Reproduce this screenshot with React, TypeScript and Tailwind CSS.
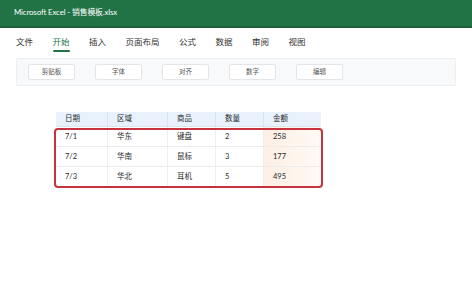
const tabs = ['文件', '开始', '插入', '页面布局', '公式', '数据', '审阅', '视图'];
const groups = ['剪贴板', '字体', '对齐', '数字', '编辑'];

const rows = [
    { date: '7/1', region: '华东', product: '键盘', qty: '2', amount: '258' },
    { date: '7/2', region: '华南', product: '鼠标', qty: '3', amount: '177' },
    { date: '7/3', region: '华北', product: '耳机', qty: '5', amount: '495' },
];

const font = { fontFamily: 'Lato, "Noto Sans CJK SC", sans-serif' };

const App = () => {
    return (
        <div className="w-[472px] h-[288px] bg-white overflow-hidden" style={font}>
            {/* title bar */}
            <div className="h-[28px] bg-[#217346] border-b-[2px] border-[#1c5f3a] flex items-center px-[14px]">
                <span className="text-[7.8px] text-white tracking-[-0.1px]">
                    Microsoft Excel - 销售模板.xlsx
                </span>
            </div>

            {/* ribbon tabs */}
            <div className="flex gap-[19.5px] px-[16px] pt-[9px] h-[30px]">
                {tabs.map((t) => (
                    <div key={t} className="flex flex-col items-center">
                        <span
                            className={
                                t === '开始'
                                    ? 'text-[8.5px] leading-[10px] text-[#217346]'
                                    : 'text-[8.5px] leading-[10px] text-[#333333]'
                            }
                        >
                            {t}
                        </span>
                        {t === '开始' && (
                            <div className="mt-[3px] h-[2px] w-full rounded-full bg-[#217346]" />
                        )}
                    </div>
                ))}
            </div>

            {/* ribbon groups */}
            <div className="mx-[16px] h-[28px] bg-[#f8f9fa] border border-[#eceeef] rounded-[2px] flex items-center gap-[20px] px-[11px]">
                {groups.map((g) => (
                    <div
                        key={g}
                        className="w-[47px] h-[16px] bg-white border border-[#e3e5e8] rounded-[2px] flex items-center justify-center text-[6.5px] text-[#555555]"
                    >
                        {g}
                    </div>
                ))}
            </div>

            {/* sheet */}
            <div className="pl-[56px] pt-[26px]">
                <div className="w-[265px] text-[7.5px] text-[#2b2b2b]">
                    <div className="grid grid-cols-[52px_60px_48px_48px_57px] h-[15px] bg-[#e8f1fc] border-b border-[#dbe6f3]">
                        {['日期', '区域', '商品', '数量', '金额'].map((h, i) => (
                            <div
                                key={h}
                                className={
                                    i < 4
                                        ? 'flex items-center pl-[9px] border-r border-[#d7e3f2]'
                                        : 'flex items-center pl-[9px]'
                                }
                            >
                                {h}
                            </div>
                        ))}
                    </div>
                    <div className="relative">
                        {rows.map((r, idx) => (
                            <div
                                key={r.date}
                                className={
                                    idx < 2
                                        ? 'grid grid-cols-[52px_60px_48px_48px_57px] h-[20px] border-b border-[#ececec]'
                                        : 'grid grid-cols-[52px_60px_48px_48px_57px] h-[20px]'
                                }
                            >
                                <div className="flex items-center pl-[9px] border-r border-[#efefef]">{r.date}</div>
                                <div className="flex items-center pl-[9px] border-r border-[#efefef]">{r.region}</div>
                                <div className="flex items-center pl-[9px] border-r border-[#efefef]">{r.product}</div>
                                <div className="flex items-center pl-[9px] border-r border-[#efefef]">{r.qty}</div>
                                <div className="flex items-center pl-[9px] bg-gradient-to-r from-[#fcefe4] to-[#fffaf6]">
                                    {r.amount}
                                </div>
                            </div>
                        ))}
                        <div className="absolute -left-[2px] -right-[2px] top-[1px] -bottom-[1px] border-[2px] border-[#c9323f] rounded-[4px] pointer-events-none" />
                    </div>
                </div>
            </div>
        </div>
    );
};

export default App;
